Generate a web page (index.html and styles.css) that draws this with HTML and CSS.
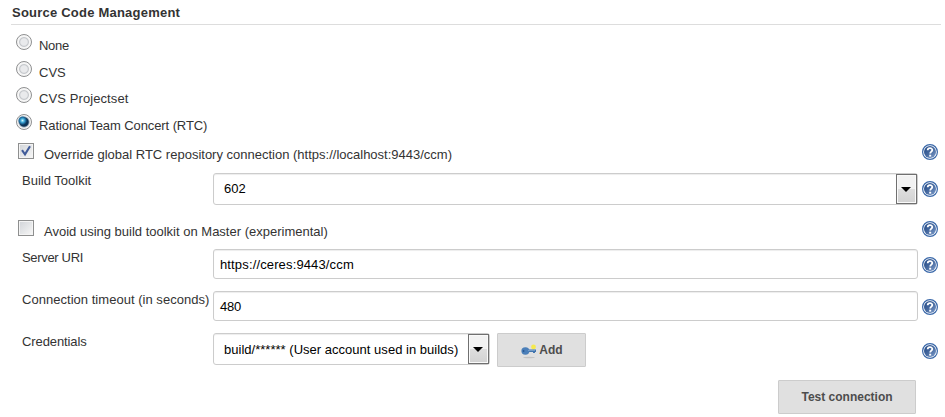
FILE: index.html
```html
<!DOCTYPE html>
<html lang="en">
<head>
<meta charset="utf-8">
<title>Source Code Management</title>
<link rel="stylesheet" href="styles.css">
</head>
<body>
<svg class="defs" width="0" height="0" aria-hidden="true">
  <defs>
    <linearGradient id="blue" x1="0" y1="0" x2="1" y2="1">
      <stop offset="0" stop-color="#1f4683"/><stop offset=".5" stop-color="#46699f"/><stop offset="1" stop-color="#7f9dcb"/>
    </linearGradient>
    <symbol id="help" viewBox="0 0 16 16">
      <circle cx="8" cy="8" r="7.4" fill="#fff" stroke="#3a68a9" stroke-width="1.2"/>
      <circle cx="8" cy="8" r="6" fill="url(#blue)"/>
      <path d="M5.7 6.2C5.7 3.5 10.3 3.5 10.3 6.1C10.3 7.6 8.2 7.7 8.2 9.5" fill="none" stroke="#fff" stroke-width="1.8"/>
      <rect x="7.2" y="10.7" width="2" height="1.9" fill="#fff"/>
    </symbol>
  </defs>
</svg>
<main class="config">
  <h1 class="title">Source Code Management</h1>
  <div class="choices">
    <div class="choice"><span class="radio"></span><span class="text w-none">None</span></div>
    <div class="choice short"><span class="radio"></span><span class="text">CVS</span></div>
    <div class="choice"><span class="radio"></span><span class="text w-proj">CVS Projectset</span></div>
    <div class="choice last"><span class="radio on"></span><span class="text w-rtc">Rational Team Concert (RTC)</span></div>
  </div>
  <div class="check-row">
    <span class="box"><svg width="12" height="12" viewBox="0 0 12 12"><path d="M2 5.2L5 9.3L10 1.2" fill="none" stroke="#405b99" stroke-width="2.1"/></svg></span>
    <span class="text">Override global RTC repository connection (https://localhost:9443/ccm)</span>
    <svg class="help"><use href="#help"/></svg>
  </div>
  <div class="field tall first">
    <span class="label">Build Toolkit</span>
    <div class="control select"><span class="value">602</span><span class="arrow"></span></div>
    <svg class="help"><use href="#help"/></svg>
  </div>
  <div class="check-row second">
    <span class="box"></span>
    <span class="text">Avoid using build toolkit on Master (experimental)</span>
    <svg class="help"><use href="#help"/></svg>
  </div>
  <div class="field">
    <span class="label w-server">Server URI</span>
    <div class="control lowered"><span class="value w-uri">https://ceres:9443/ccm</span></div>
    <svg class="help"><use href="#help"/></svg>
  </div>
  <div class="field">
    <span class="label w-time">Connection timeout (in seconds)</span>
    <div class="control lowered"><span class="value w-num">480</span></div>
    <svg class="help"><use href="#help"/></svg>
  </div>
  <div class="field tall credentials">
    <span class="label w-cred">Credentials</span>
    <div class="pair">
      <div class="control select"><span class="value w-user">build/****** (User account used in builds)</span><span class="arrow"></span></div>
      <div class="button add">
        <svg width="16" height="16" viewBox="0 0 16 16">
          <ellipse cx="8" cy="14.5" rx="6" ry=".7" fill="#c3c3c3"/>
          <circle cx="12.5" cy="4" r="2.4" fill="#f5e94e"/>
          <path d="M7 6.5H15V9H14V10H12V9H7Z" fill="#4275ae"/>
          <ellipse cx="4.4" cy="8" rx="4" ry="3.7" fill="#4b7fb9"/>
          <circle cx="2.6" cy="8" r=".9" fill="#28568f"/>
          <path d="M7 7.4H14" stroke="#8fb3da" stroke-width=".7"/>
        </svg>
        <span>Add</span>
      </div>
    </div>
    <svg class="help"><use href="#help"/></svg>
  </div>
  <div class="actions"><div class="button test"><span>Test connection</span></div></div>
</main>
</body>
</html>
```
FILE: styles.css
```css
* { box-sizing: border-box; }
body {
  margin: 0;
  background: #fff;
  color: #333;
  font: 13px/16px "Liberation Sans", Arial, sans-serif;
  overflow: hidden;
}
.defs { display: block; }
.config { width: 945px; height: 417px; }
.title {
  height: 25px;
  margin: 0 4px 0 11px;
  padding: 5px 0 0 1px;
  border-bottom: 1px solid #ddd;
  font-size: 13px;
  line-height: 16px;
  letter-spacing: .22px;
  white-space: nowrap;
}
.choices { padding: 9px 0 0 16px; }
.choice { display: flex; gap: 7px; height: 27px; }
.choice.short { height: 26px; }
.choice.last { height: 29px; }
.text { padding-top: 4px; white-space: nowrap; }
.w-none { letter-spacing: -.3px; }
.w-proj { letter-spacing: .09px; }
.w-rtc { letter-spacing: -.09px; }
.w-server { letter-spacing: -.33px; }
.w-uri { letter-spacing: .14px; }
.w-num { letter-spacing: -.2px; }
.w-time { letter-spacing: .03px; }
.w-cred { letter-spacing: -.1px; }
.w-user { padding-top: 2px; letter-spacing: .02px; }
.radio {
  width: 16px;
  height: 16px;
  border: 1px solid #8f9091;
  border-radius: 50%;
  background: radial-gradient(circle at 7px 7px, #e9eaec 0 3.2px, #c3c6ca 4.4px, #f6f6f6 5.4px);
}
.radio.on {
  background: radial-gradient(circle at 5.5px 5.5px, #d5f6fd 0, #45b0dc 1.8px, #1b6596 3.4px, transparent 4.6px), radial-gradient(circle at 7px 7px, #0d3456 0 4.2px, #a6b3c0 5.2px, #f4f4f4 6px);
}
.check-row { display: flex; height: 30px; padding-left: 18px; padding-right: 7px; }
.check-row.second { height: 29px; }
.check-row .help { margin: 1px 0 0 auto; }
.box {
  display: block;
  width: 16px;
  height: 16px;
  margin-right: 10px;
  padding: 1px;
  border: 1px solid #8e8f8f;
  background: linear-gradient(135deg, #d3d6da, #f5f5f5) content-box;
  box-shadow: inset 0 0 0 1px #f4f4f4;
}
.box svg { display: block; }
.help { flex: none; width: 16px; height: 16px; }
.field {
  display: grid;
  grid-template-columns: 191px 705px 20px;
  height: 42px;
  padding-left: 22px;
  align-items: start;
}
.field .help { margin: 8px 0 0 4px; }
.field.tall { height: 47px; }
.credentials .help { margin-top: 10px; }
.label { padding-top: 1px; white-space: nowrap; }
.first .label { padding-top: 0; }
.control {
  display: flex;
  align-items: center;
  justify-content: space-between;
  height: 30px;
  padding-left: 6px;
  border: 1px solid #ccc;
  border-radius: 3px;
  background: #fff;
  box-shadow: inset 0 1px 1px rgba(0, 0, 0, .075);
  color: #000;
  white-space: nowrap;
}
.lowered { padding-top: 2px; }
.select { height: 32px; padding-left: 10px; }
.arrow {
  display: flex;
  align-items: center;
  justify-content: center;
  width: 21px;
  height: 30px;
  padding-right: 1px;
  border: 1px solid #707070;
  background: linear-gradient(#f2f2f2 0 50%, #dedede 50%, #d2d2d2);
  box-shadow: inset 0 0 0 1px #fafafa;
}
.arrow::before {
  content: "";
  border: solid transparent;
  border-width: 5px 5px 0;
  border-top-color: #000;
}
.pair { display: flex; gap: 7px; }
.pair .control { width: 277px; }
.button {
  display: flex;
  align-items: center;
  justify-content: center;
  height: 34px;
  border: 1px solid #ccc;
  border-radius: 1px;
  background: #e0e0e0;
  color: #4d4d4d;
  font-size: 12px;
  font-weight: bold;
  white-space: nowrap;
}
.add { width: 89px; gap: 2px; padding-left: 1px; }
.add svg { position: relative; top: 1px; }
.test { width: 138px; }
.actions { display: flex; justify-content: flex-end; padding-right: 29px; }
```
